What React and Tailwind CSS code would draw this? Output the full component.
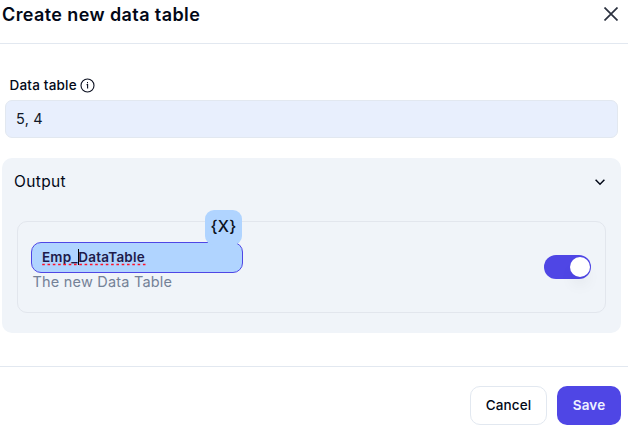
import React from "react";

function InfoIcon() {
  return (
    <svg className="h-[15px] w-[15px]" viewBox="0 0 15 15" fill="none" stroke="#0b1020">
      <circle cx="7.5" cy="7.5" r="6.5" strokeWidth="1.1" />
      <path d="M6.6 6.6h1v4" strokeWidth="1.1" />
      <path d="M7 4.6h1" strokeWidth="1.2" />
    </svg>
  );
}

function Header() {
  return (
    <header className="flex h-11 shrink-0 items-start justify-between border-b border-[#e2e8f0] pr-[10px] pl-[2px]">
      <h1 className="pt-[1px] text-[18px] leading-[28px] font-semibold tracking-[0.4px] whitespace-nowrap">
        Create new data table
      </h1>
      <svg className="mt-[7px] h-[14px] w-[14px]" viewBox="0 0 14 14" fill="none" stroke="#2b313f" strokeWidth="1.7">
        <path d="M0.5 0.5l13 13M13.5 0.5l-13 13" />
      </svg>
    </header>
  );
}

function Spelling() {
  return (
    <svg className="absolute top-[20px] left-[10px] h-[3px] w-[104px]" viewBox="0 0 104 3" fill="none">
      <path d="M0.2 1.5H104" stroke="#ff1028" strokeWidth="1.4" strokeDasharray="2.6 2.7" />
    </svg>
  );
}

function VariableField() {
  return (
    <div className="relative h-[31px] w-[212px] rounded-[10px] border border-[#4f46e5] bg-[#b0d4ff] pl-[10px] text-[13.5px] leading-[29px] font-semibold text-[#1e1b4b]">
      <span className="tracking-[0.2px]">Emp_DataTable</span>
      <Spelling />
      <span className="absolute top-[6px] left-[46px] h-[16px] w-px bg-black" />
      <span className="absolute -top-[33px] left-[173px] h-[35px] w-[37px] rounded-[9px] bg-[#b0d4ff] text-center text-[16px] leading-[33px] font-medium tracking-[0.3px] text-[#0b1020]">
        {"{X}"}
      </span>
    </div>
  );
}

function Toggle() {
  return (
    <div className="flex h-6 w-[47px] items-center justify-end rounded-full bg-[#4f46e5] pr-[1.5px]">
      <div className="h-5 w-5 rounded-full bg-white shadow-[0_10px_15px_-3px_rgba(0,0,0,0.08)]" />
    </div>
  );
}

export default function App() {
  return (
    <div className="flex h-[429px] w-[628px] flex-col overflow-hidden bg-white font-['Inter',sans-serif] text-[#020817]">
      <Header />
      <main className="flex h-[322px] shrink-0 flex-col">
        <div className="mt-[31px] flex h-5 items-center gap-[3px] pl-[9.5px] text-[13.5px] leading-5 font-medium tracking-[0.2px]">
          <span>Data table</span>
          <InfoIcon />
        </div>
        <div className="mt-[5px] ml-[5px] h-[38px] w-[613px] rounded-[7px] border border-[#e2e8f0] bg-[#e8effd] pl-[10px] text-[14.5px] leading-[36px] tracking-[0.2px] text-[#111827]">
          5, 4
        </div>
        <section className="mt-5 ml-[2px] h-[175px] w-[619px] rounded-[10px] bg-[#f0f4f9]">
          <div className="flex h-[63px] items-start justify-between pr-[16px] pl-[12px]">
            <h2 className="pt-3 text-[15.5px] leading-6 tracking-[0.35px]">Output</h2>
            <svg className="mt-[21px] h-[7px] w-[10px]" viewBox="0 0 10 7" fill="none" stroke="#020817" strokeWidth="1.5">
              <path d="M0.6 0.8L5 5.2L9.4 0.8" />
            </svg>
          </div>
          <div className="ml-[15px] flex h-[92px] w-[589px] items-center justify-between rounded-[10px] border border-[#e2e6ed] pr-[14px] pl-[13px]">
            <div className="pb-[1px]">
              <VariableField />
              <p className="pl-[1.5px] text-[14.5px] leading-[18px] tracking-[0.2px] text-[#748197]">The new Data Table</p>
            </div>
            <Toggle />
          </div>
        </section>
      </main>
      <footer className="flex grow items-start justify-end gap-[10px] border-t border-[#e2e8f0] pt-[19px] pr-[7px] text-[13.5px] font-medium tracking-[0.15px]">
        <button className="h-[39px] w-[77px] rounded-[10px] border border-[#e2e8f0] bg-white pb-[1px]">Cancel</button>
        <button className="h-[39px] w-[64px] rounded-[10px] bg-[#4f46e5] pb-[1px] font-semibold text-[#eef2ff]">Save</button>
      </footer>
    </div>
  );
}
